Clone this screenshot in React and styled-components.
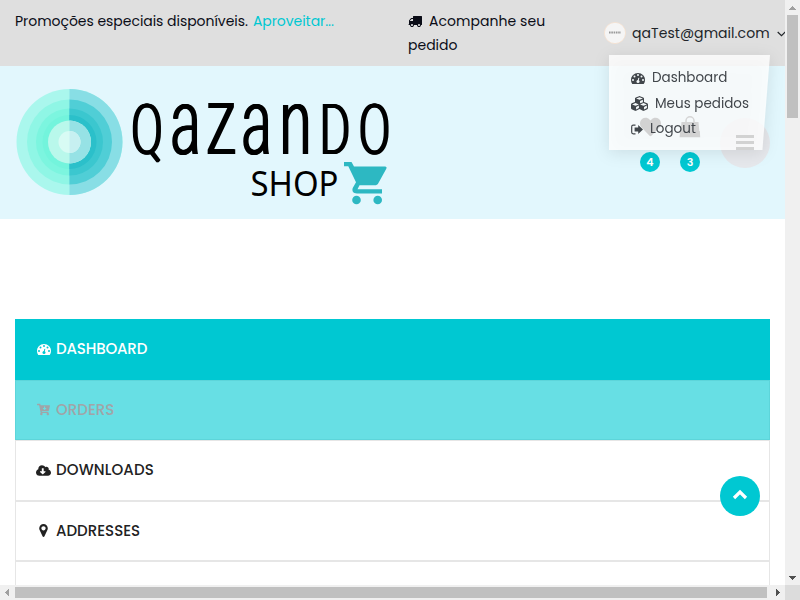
import React from "react";
import styled, { createGlobalStyle } from "styled-components";
import { FaCubes, FaCartArrowDown, FaCloudDownloadAlt, FaHeart } from "react-icons/fa";

const Global = createGlobalStyle`
  *, *::before, *::after { box-sizing: border-box; }
  body { margin: 0; overflow: hidden; background: #fff; }
  svg { display: block; flex: none; }
`;

const Window = styled.div`
  width: 800px;
  height: 600px;
  display: grid;
  grid-template: 585px 15px / 785px 15px;
  font-family: Poppins, Inter, "Open Sans", sans-serif;
  font-feature-settings: "cv11" 1;
  font-size: 14px;
  color: #0b0d17;
`;
const Viewport = styled.div`
  position: relative;
  overflow: hidden;
  background: #fff;
`;
const Words = styled.span`
  white-space: nowrap;
  letter-spacing: ${(p) => p.$track || 0}px;
`;

const TopBar = styled.div`
  height: 66px;
  display: grid;
  grid-template-columns: 393px 196px 196px;
  background: #dfdfdf;
  line-height: 24px;
`;
const Promo = styled.div`
  padding: 9px 0 0 15px;
  display: flex;
  gap: 5px;
  a { color: #00c8d2; }
`;
const Track = styled.div`
  padding: 9px 0 0 15px;
  div { display: flex; align-items: center; gap: 7px; }
`;
const Account = styled.div`
  padding: 22px 0 0 15px;
  display: flex;
  align-items: flex-start;
  gap: 6px;
  line-height: 22px;
  color: #212529;
  > svg:last-child { margin: 9px 0 0 1px; }
`;
const Header = styled.header`
  height: 153px;
  padding: 0 15px;
  display: flex;
  justify-content: space-between;
  background: #e2f7fd;
`;
const Actions = styled.div`
  display: flex;
  gap: 20px;
  padding-top: 50px;
`;
const Action = styled.div`
  width: 20px;
  display: flex;
  flex-direction: column;
  align-items: center;
  color: #222;
  > svg { height: 22px; }
`;
const Count = styled.span`
  margin-top: 14px;
  width: 20px;
  height: 20px;
  border-radius: 50%;
  background: #00c8d2;
  color: #fff;
  font-size: 11px;
  line-height: 20px;
  font-weight: 600;
  text-align: center;
`;
const MenuButton = styled.div`
  width: 50px;
  height: 50px;
  margin-top: 2px;
  padding-bottom: 2px;
  border-radius: 50%;
  background: #e6e8ec;
  display: flex;
  flex-direction: column;
  align-items: center;
  justify-content: center;
  gap: 3px;
  i { width: 18px; height: 3px; background: #222; }
`;
const Dropdown = styled.div`
  position: absolute;
  left: 609px;
  top: 55px;
  width: 161px;
  height: 95px;
  filter: drop-shadow(0 3px 8px rgba(0, 0, 0, 0.12));
`;
const DropdownBody = styled.div`
  height: 100%;
  padding: 10.6px 0 0 22px;
  clip-path: polygon(0 0, 100% 0, 95.3% 100%, 0 100%);
  background: rgba(255, 255, 255, 0.8);
  color: #41464b;
  font-size: 13.5px;
`;
const DropdownItem = styled.div`
  height: 25.4px;
  display: flex;
  align-items: center;
  gap: 7px;
`;
const SideNav = styled.nav`
  margin: 100px 15px 0;
`;
const backgrounds = { active: "#00c8d2", hover: "#67dfe4", plain: "#fff" };
const borders = { active: "#00c8d2", hover: "#5dd5da", plain: "#e6e6e6" };
const inks = { active: "#fff", hover: "#a0a5a8", plain: "#222" };
const NavItem = styled.div`
  height: 60.5px;
  padding: 0 20px 1px;
  display: flex;
  align-items: center;
  font-size: 15px;
  font-weight: 500;
  background: ${(p) => backgrounds[p.$state]};
  border: 1px solid ${(p) => borders[p.$state]};
  color: ${(p) => inks[p.$state]};
`;
const NavIcon = styled.span`
  width: 20px;
  display: flex;
  padding: 1px 0 0 ${(p) => p.$indent || 0}px;
`;
const ToTop = styled.div`
  position: absolute;
  left: 720px;
  top: 476px;
  width: 40px;
  height: 40px;
  border-radius: 50%;
  background: #00c8d2;
`;
const Bar = styled.div`
  background: #f0f0f0;
  display: flex;
  flex-direction: ${(p) => (p.$vertical ? "column" : "row")};
  justify-content: space-between;
`;
const Thumb = styled.div`
  background: #c0c0c0;
  ${(p) => (p.$vertical ? "width: 11px; height: 103px; margin: 0 2px auto;" : "height: 11px; width: 752px; margin: 2px auto 2px 0;")}
`;
const Corner = styled.div`
  background: #dcdcdc;
`;
const LogoSvg = styled.svg`
  .name {
    font-family: Roboto, sans-serif;
    font-weight: 300;
    filter: drop-shadow(1px 0 0 #000) drop-shadow(-1px 0 0 #000);
  }
  .shop { font-family: "Noto Sans", "Open Sans", sans-serif; }
`;

const letters = [
  ["Q", 131, 71, 32], ["a", 170.5, 93, 30], ["z", 206, 96, 30],
  ["a", 241.5, 93, 30], ["n", 279.5, 93, 32], ["D", 319.5, 71, 31], ["O", 358.5, 71, 32],
];

function Logo() {
  return (
    <LogoSvg width="375" height="153" viewBox="15 66 375 153">
      <circle cx="69.5" cy="142" r="53" fill="#aaf7ed" />
      <circle cx="69.5" cy="142" r="42.5" fill="#8ff6e5" />
      <circle cx="69.5" cy="142" r="33.5" fill="#7cf5df" />
      <circle cx="69.5" cy="142" r="27" fill="#73f4dc" />
      <path d="M69.5 89a53 53 0 0 1 0 106z" fill="#88dee5" />
      <path d="M69.5 99.5a42.5 42.5 0 0 1 0 85z" fill="#50ced6" />
      <path d="M69.5 108.5a33.5 33.5 0 0 1 0 67z" fill="#3bc7cf" />
      <path d="M69.5 115a27 27 0 0 1 0 54z" fill="#2bc0ca" />
      <circle cx="69.5" cy="142" r="21.5" fill="#b9f8eb" />
      <path d="M69.5 120.5a21.5 21.5 0 0 1 0 43z" fill="#96e2e5" />
      <circle cx="69.5" cy="142" r="11" fill="#d8fbf4" />
      <path d="M69.5 131a11 11 0 0 1 0 22z" fill="#c7f0f1" />
      <g className="name">
        {letters.map(([ch, x, size, w]) => (
          <text key={x} x={x} y="154" fontSize={size} textLength={w} lengthAdjust="spacingAndGlyphs">{ch}</text>
        ))}
      </g>
      <text className="shop" x="250.5" y="195.5" fontSize="34.5" textLength="88" lengthAdjust="spacingAndGlyphs">SHOP</text>
      <g fill="#2db8c2">
        <path d="M344 162h7.500l2.500 4.500h31c1.500 0 2 1 1.300 2.200l-8 14.500c-.8 1.400-2 2-3.300 2h-15.500l-2 4h24.500v4.300H357c-4 0-5.500-3-4-6l3-5.300-7.700-16H344z" />
        <circle cx="356.5" cy="200" r="4.300" />
        <circle cx="377.7" cy="200" r="4.300" />
      </g>
    </LogoSvg>
  );
}

function Bag() {
  return (
    <svg width="22" height="22" viewBox="0 0 22 22">
      <path d="M7 9V4.800a4 4 0 0 1 8 0V9" fill="none" stroke="#333" strokeWidth="1.5" />
      <path d="M2.500 6h17l.8 9H1.500z" fill="#333" />
      <path d="M1.200 15h19.600l.4 6.300H.6z" fill="#222" />
    </svg>
  );
}

function Gauge({ id }) {
  return (
    <svg width="14" height="14" viewBox="0 0 1792 1792">
      <mask id={id}>
        <rect width="1792" height="1792" fill="#fff" />
        <circle cx="256" cy="1152" r="128" />
        <circle cx="448" cy="704" r="128" />
        <circle cx="896" cy="512" r="128" />
        <circle cx="1344" cy="704" r="128" />
        <circle cx="1536" cy="1152" r="128" />
        <circle cx="896" cy="1344" r="192" />
        <path d="m900 1290 94-360" stroke="#000" strokeWidth="128" strokeLinecap="round" />
      </mask>
      <path mask={`url(#${id})`} fill="currentColor" d="M1792 1152q0 261-141 483-19 29-54 29H195q-35 0-54-29Q0 1414 0 1152q0-182 71-348t191-286 286-191 348-71 348 71 286 191 191 286 71 348z" />
    </svg>
  );
}

function Truck() {
  return (
    <svg width="14" height="14" viewBox="0 0 1792 1792" fill="currentColor">
      <path d="M640 1408q0-52-38-90t-90-38-90 38-38 90 38 90 90 38 90-38 38-90zm-384-512h384v-256h-158q-13 0-22 9l-195 195q-9 9-9 22v30zm1280 512q0-52-38-90t-90-38-90 38-38 90 38 90 90 38 90-38 38-90zm256-1088v1024q0 15-4 26.500t-13.500 18.500-16.500 11.500-23.500 6-22.500 2-25.500 0-22.500-.5q0 106-75 181t-181 75-181-75-75-181h-384q0 106-75 181t-181 75-181-75-75-181h-64q-3 0-22.500.5t-25.500 0-22.500-2-23.500-6-16.500-11.500-13.500-18.500-4-26.500q0-26 19-45t45-19v-320q0-8-.5-35t0-38 2.500-34.500 6.500-37 14-30.500 22.500-30l198-198q19-19 50.500-32t58.500-13h160v-192q0-26 19-45t45-19h1024q26 0 45 19t19 45z" />
    </svg>
  );
}

function Marker() {
  return (
    <svg width="15" height="15" viewBox="0 0 1792 1792" fill="currentColor">
      <path d="M1152 640q0-106-75-181t-181-75-181 75-75 181 75 181 181 75 181-75 75-181zm256 0q0 109-33 179l-364 774q-16 33-47.500 52t-67.500 19-67.500-19-46.500-52l-365-774q-33-70-33-179 0-212 150-362t362-150 362 150 150 362z" />
    </svg>
  );
}

function SignOut() {
  return (
    <svg width="12" height="11" viewBox="0 0 12 11">
      <path d="M4.500 1.200H2.200Q.7 1.200.7 2.700v5.600q0 1.500 1.500 1.500h2.300" fill="none" stroke="currentColor" strokeWidth="1.200" />
      <path d="M3.600 3.500h3.600V1L12 5.500 7.200 10V7.500H3.600z" fill="currentColor" />
    </svg>
  );
}

function Arrow({ points, color }) {
  return <svg width="15" height="15" shapeRendering="crispEdges"><polygon points={points} fill={color} /></svg>;
}

export default function App() {
  return (
    <>
      <Global />
      <Window>
        <Viewport>
          <TopBar>
            <Promo>
              <Words $track={-0.04}>Promoções especiais disponíveis.</Words>
              <a><Words $track={-0.05}>Aproveitar...</Words></a>
            </Promo>
            <Track>
              <div><Truck /><Words $track={0.05}>Acompanhe seu</Words></div>
              <Words>pedido</Words>
            </Track>
            <Account>
              <svg width="22" height="22" viewBox="0 0 22 22">
                <circle cx="11" cy="11" r="10.600" fill="#f5f5f5" stroke="#f8dfcc" strokeWidth=".7" />
                <path d="M5 10.500h12" stroke="#999" strokeWidth="1.800" strokeDasharray="1.600 .7" />
              </svg>
              <Words $track={0.05}>qaTest@gmail.com</Words>
              <svg width="9" height="6" viewBox="0 0 9 6"><path d="M.7 1 4.500 4.600 8.300 1" fill="none" stroke="#212529" strokeWidth="1.200" /></svg>
            </Account>
          </TopBar>
          <Header>
            <Logo />
            <Actions>
              <Action><FaHeart size={21} /><Count>4</Count></Action>
              <Action><Bag /><Count>3</Count></Action>
              <MenuButton><i /><i /><i /></MenuButton>
            </Actions>
          </Header>
          <SideNav>
            <NavItem $state="active"><NavIcon $indent={1}><Gauge id="gauge-nav" /></NavIcon><Words $track={-0.15}>DASHBOARD</Words></NavItem>
            <NavItem $state="hover"><NavIcon $indent={1}><FaCartArrowDown size={13} /></NavIcon><Words>ORDERS</Words></NavItem>
            <NavItem $state="plain"><NavIcon><FaCloudDownloadAlt size={15} /></NavIcon><Words $track={0.12}>DOWNLOADS</Words></NavItem>
            <NavItem $state="plain"><NavIcon><Marker /></NavIcon><Words>ADDRESSES</Words></NavItem>
            <NavItem $state="plain" />
          </SideNav>
          <Dropdown>
            <DropdownBody>
              <DropdownItem><Gauge id="gauge-menu" /><Words>Dashboard</Words></DropdownItem>
              <DropdownItem><FaCubes size={17} /><Words>Meus pedidos</Words></DropdownItem>
              <DropdownItem><SignOut /><Words>Logout</Words></DropdownItem>
            </DropdownBody>
          </Dropdown>
          <ToTop>
            <svg width="40" height="40"><path d="m14 22 6-6 6 6" fill="none" stroke="#fff" strokeWidth="3.200" /></svg>
          </ToTop>
        </Viewport>
        <Bar $vertical>
          <Arrow points="4,10 11,10 7.5,6" color="#a0a0a0" />
          <Thumb $vertical />
          <Arrow points="4,6 11,6 7.5,10" color="#505050" />
        </Bar>
        <Bar>
          <Arrow points="9,4 9,11 5,7.5" color="#a0a0a0" />
          <Thumb />
          <Arrow points="6,4 6,11 10,7.5" color="#505050" />
        </Bar>
        <Corner />
      </Window>
    </>
  );
}
